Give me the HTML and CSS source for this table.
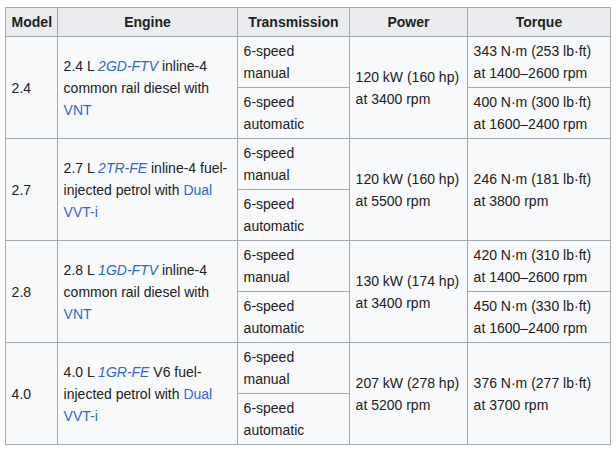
FILE: index.html
```html
<!DOCTYPE html>
<html>
<head>
<meta charset="utf-8">
<link rel="stylesheet" href="styles.css">
</head>
<body>
<table class="wikitable">
<colgroup>
<col class="c-model"><col class="c-engine"><col class="c-trans"><col class="c-power"><col class="c-torque">
</colgroup>
<thead>
<tr><th>Model</th><th>Engine</th><th>Transmission</th><th>Power</th><th>Torque</th></tr>
</thead>
<tbody>
<tr>
<td rowspan="2">2.4</td>
<td rowspan="2">2.4 L <a class="link"><i>2GD-FTV</i></a> inline-4 common rail diesel with <a class="link">VNT</a></td>
<td>6-speed manual</td>
<td rowspan="2">120 kW (160 hp) at 3400 rpm</td>
<td>343 N·m (253 lb·ft) at 1400–2600 rpm</td>
</tr>
<tr>
<td>6-speed automatic</td>
<td>400 N·m (300 lb·ft) at 1600–2400 rpm</td>
</tr>
<tr>
<td rowspan="2">2.7</td>
<td rowspan="2">2.7 L <a class="link"><i>2TR-FE</i></a> inline-4 fuel-injected petrol with <a class="link">Dual VVT-i</a></td>
<td>6-speed manual</td>
<td rowspan="2">120 kW (160 hp) at 5500 rpm</td>
<td rowspan="2">246 N·m (181 lb·ft) at 3800 rpm</td>
</tr>
<tr>
<td>6-speed automatic</td>
</tr>
<tr>
<td rowspan="2">2.8</td>
<td rowspan="2">2.8 L <a class="link"><i>1GD-FTV</i></a> inline-4 common rail diesel with <a class="link">VNT</a></td>
<td>6-speed manual</td>
<td rowspan="2">130 kW (174 hp) at 3400 rpm</td>
<td>420 N·m (310 lb·ft) at 1400–2600 rpm</td>
</tr>
<tr>
<td>6-speed automatic</td>
<td>450 N·m (330 lb·ft) at 1600–2400 rpm</td>
</tr>
<tr>
<td rowspan="2">4.0</td>
<td rowspan="2">4.0 L <a class="link"><i>1GR-FE</i></a> V6 fuel-injected petrol with <a class="link">Dual VVT-i</a></td>
<td>6-speed manual</td>
<td rowspan="2">207 kW (278 hp) at 5200 rpm</td>
<td rowspan="2">376 N·m (277 lb·ft) at 3700 rpm</td>
</tr>
<tr>
<td>6-speed automatic</td>
</tr>
</tbody>
</table>
</body>
</html>
```
FILE: styles.css
```css
html, body {
  margin: 0;
  padding: 0;
  background: #ffffff;
}
body {
  padding: 7px 0 0 5px;
  font-family: "Liberation Sans", Arial, sans-serif;
  font-size: 14px;
  line-height: 22px;
  color: #202122;
}
.wikitable {
  border-collapse: collapse;
  table-layout: fixed;
  width: 606px;
  background: #f8f9fa;
  color: #202122;
  border: 1px solid #a2a9b1;
}
.c-model { width: 52px; }
.c-engine { width: 180px; }
.c-trans { width: 112px; }
.c-power { width: 118px; }
.c-torque { width: 143px; }
.wikitable th,
.wikitable td {
  border: 1px solid #a2a9b1;
  padding: 3px 5.6px;
  text-align: left;
  vertical-align: middle;
}
.wikitable th {
  background: #eaecf0;
  text-align: center;
  font-weight: bold;
}
.link {
  color: #3366cc;
  text-decoration: none;
}
```
